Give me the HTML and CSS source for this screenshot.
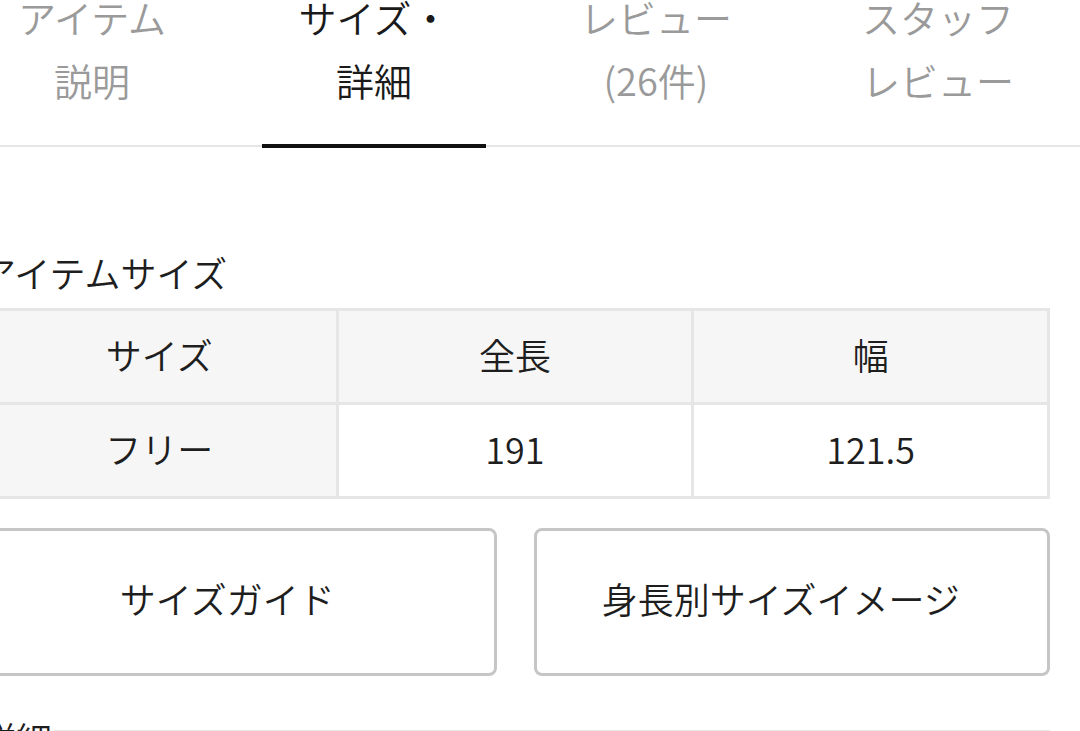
FILE: index.html
```html
<!DOCTYPE html>
<html lang="ja">
<head>
<meta charset="utf-8">
<title>サイズ・詳細</title>
<link rel="stylesheet" href="styles.css">
</head>
<body>
<nav class="tabs">
  <div class="tab">アイテム<br>説明</div>
  <div class="tab active">サイズ・<br>詳細</div>
  <div class="tab">レビュー<br>(26件)</div>
  <div class="tab">スタッフ<br>レビュー</div>
</nav>
<main class="page">
  <h2 class="heading">アイテムサイズ</h2>
  <table class="size-table">
    <thead>
      <tr><th>サイズ</th><th>全長</th><th>幅</th></tr>
    </thead>
    <tbody>
      <tr><th>フリー</th><td>191</td><td>121.5</td></tr>
    </tbody>
  </table>
  <div class="buttons">
    <button class="btn">サイズガイド</button>
    <button class="btn">身長別サイズイメージ</button>
  </div>
  <div class="section-head">
    <h2 class="heading">詳細</h2>
    <div class="rule"></div>
  </div>
</main>
</body>
</html>
```

FILE: styles.css
```css
html, body {
  margin: 0;
  padding: 0;
  background: #fff;
}
body {
  width: 1080px;
  height: 731px;
  overflow: hidden;
  font-family: "Noto Sans CJK JP", "Noto Sans", sans-serif;
  font-weight: 350;
  color: #1e1e1e;
}
.tabs {
  display: flex;
  margin-top: -15px;
  margin-left: -49px;
  width: 1129px;
  border-bottom: 2px solid #e6e6e6;
}
.tab {
  position: relative;
  width: 282px;
  flex: none;
  text-align: center;
  font-size: 38px;
  line-height: 63px;
  color: #9a9a9a;
  padding-bottom: 34px;
}
.tab.active {
  color: #1a1a1a;
}
.tab.active::after {
  content: "";
  position: absolute;
  left: 29px;
  right: 29px;
  bottom: -3px;
  height: 4px;
  background: #111;
}
.page {
  margin-left: -20px;
  width: 1070px;
}
.heading {
  margin: 0;
  font-size: 36px;
  font-weight: 350;
  line-height: 50px;
}
.page > .heading {
  margin-top: 100px;
  margin-bottom: 11px;
}
.size-table {
  width: 100%;
  border-collapse: separate;
  border-spacing: 3px;
  background: #e6e6e6;
  table-layout: fixed;
  font-size: 36px;
}
.size-table th,
.size-table td {
  height: 85px;
  padding: 0 0 6px;
  text-align: center;
  vertical-align: middle;
  font-weight: 350;
  background: #fff;
}
.size-table th {
  background: #f6f6f6;
}
.buttons {
  display: flex;
  gap: 37px;
  margin-top: 29px;
}
.btn {
  flex: 1;
  height: 148px;
  border: 3px solid #c6c6c6;
  border-radius: 8px;
  background: #fff;
  font-family: inherit;
  font-weight: 350;
  font-size: 36px;
  color: #1e1e1e;
  padding: 0 22px 8px 0;
}
.section-head {
  display: flex;
  margin-top: 37px;
}
.rule {
  flex: 1;
  height: 2px;
  margin-top: 17px;
  margin-left: 2px;
  background: #e6e6e6;
}
```
